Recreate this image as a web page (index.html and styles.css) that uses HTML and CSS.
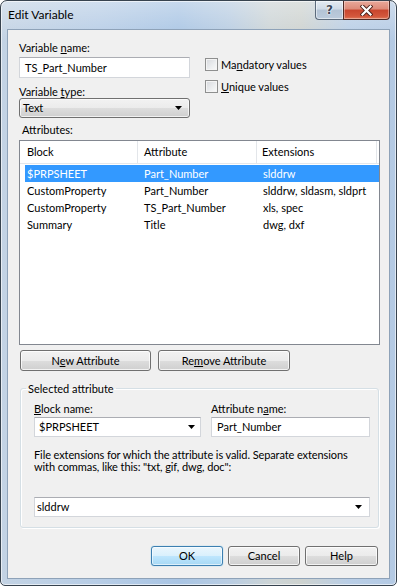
FILE: index.html
```html
<!DOCTYPE html>
<html>
<head>
<meta charset="utf-8">
<title>Edit Variable</title>
<link rel="stylesheet" href="styles.css">
</head>
<body>
<div class="window">
  <div class="titlebar">
    <span class="title">Edit Variable</span>
    <div class="caption-btns">
      <div class="cap cap-help"><span class="qmark">?</span></div>
      <div class="cap cap-close">
        <svg width="13" height="11" viewBox="0 0 13 11"><path class="x-outer" d="M2.5 1.5 L10.5 9.5 M10.5 1.5 L2.5 9.5"/><path class="x-inner" d="M2.5 1.5 L10.5 9.5 M10.5 1.5 L2.5 9.5"/></svg>
      </div>
    </div>
  </div>
  <div class="client">
    <div class="top">
      <div class="col-left">
        <div class="lbl">Variable <u>n</u>ame:</div>
        <div class="textbox tb-name">TS_Part_Number</div>
        <div class="lbl lbl-type">Variable <u>t</u>ype:</div>
        <div class="combo-btn"><span>Text</span><svg class="arrow" width="7" height="4" viewBox="0 0 7 4"><path d="M0 0H7L3.5 4Z"/></svg></div>
      </div>
      <div class="col-right">
        <div class="check check-1"><span class="box"></span><span>Ma<u>n</u>datory values</span></div>
        <div class="check check-2"><span class="box"></span><span><u>U</u>nique values</span></div>
      </div>
    </div>
    <div class="lbl lbl-attrs">Attributes:</div>
    <div class="listview">
      <div class="lv-head"><div class="hc">Block</div><div class="hc">Attribute</div><div class="hc">Extensions</div></div>
      <div class="lv-body">
        <div class="lv-row selected"><div>$PRPSHEET</div><div>Part_Number</div><div>slddrw</div></div>
        <div class="lv-row"><div>CustomProperty</div><div>Part_Number</div><div>slddrw, sldasm, sldprt</div></div>
        <div class="lv-row"><div>CustomProperty</div><div>TS_Part_Number</div><div>xls, spec</div></div>
        <div class="lv-row"><div>Summary</div><div>Title</div><div>dwg, dxf</div></div>
      </div>
    </div>
    <div class="btnrow">
      <button class="btn btn-new">N<u>e</u>w Attribute</button>
      <button class="btn btn-remove">Re<u>m</u>ove Attribute</button>
    </div>
    <fieldset class="group">
      <legend>Selected attribute</legend>
      <div class="fields">
        <div class="field">
          <div class="lbl"><u>B</u>lock name:</div>
          <div class="combo-edit block-combo"><span>$PRPSHEET</span><svg class="arrow" width="7" height="4" viewBox="0 0 7 4"><path d="M0 0H7L3.5 4Z"/></svg></div>
        </div>
        <div class="field">
          <div class="lbl">Attribute n<u>a</u>me:</div>
          <div class="textbox tb-attr">Part_Number</div>
        </div>
      </div>
      <p class="desc">File extensions for which the attribute is valid. Separate extensions<br>with commas, like this: "txt, gif, dwg, doc":</p>
      <div class="combo-edit ext-combo"><span>slddrw</span><svg class="arrow" width="7" height="4" viewBox="0 0 7 4"><path d="M0 0H7L3.5 4Z"/></svg></div>
    </fieldset>
    <div class="dlg-btns">
      <button class="btn btn-dlg btn-default">OK</button>
      <button class="btn btn-dlg">Cancel</button>
      <button class="btn btn-dlg btn-help">Help</button>
    </div>
  </div>
</div>
</body>
</html>
```
FILE: styles.css
```css
* { box-sizing: border-box; }
html, body { margin: 0; padding: 0; }
body {
  width: 397px;
  height: 586px;
  overflow: hidden;
  background: #ffffff;
  font-family: Lato, "Liberation Sans", sans-serif;
  font-size: 11px;
  color: #000;
}
u { text-decoration: underline; text-underline-offset: 1px; }

.window {
  width: 397px;
  height: 586px;
  border: 1px solid #37434f;
  border-radius: 7px 7px 5px 5px;
  overflow: hidden;
  display: flex;
  flex-direction: column;
  background:
    linear-gradient(180deg, rgba(255,255,255,0.35) 0px, rgba(255,255,255,0) 40px),
    linear-gradient(90deg, #c3d3e4 0%, #b7cde6 25%, #a9c5e4 45%, #b9cde2 58%, #ccd4d6 68%, #cdd2cf 76%, #b9cee6 88%, #b4cae4 100%);
  box-shadow: inset 0 0 0 1px rgba(255,255,255,0.6);
}

.titlebar {
  height: 28px;
  flex: none;
  display: flex;
  justify-content: space-between;
  align-items: flex-start;
  padding: 0 6px 0 7px;
}
.title {
  font-size: 12px;
  line-height: 14px;
  margin-top: 7px;
  color: #000;
}
.caption-btns { display: flex; }
.cap {
  height: 19px;
  display: flex;
  align-items: center;
  justify-content: center;
}
.cap-help {
  width: 28px;
  border: 1px solid #5c6b7c;
  border-right: none;
  border-top: none;
  border-radius: 0 0 0 4px;
  background: linear-gradient(180deg, #e4ebf2 0%, #cfdae6 45%, #b3c3d5 50%, #bccbdc 100%);
  box-shadow: inset 0 0 0 1px rgba(255,255,255,0.5);
}
.qmark {
  font-family: "DejaVu Sans", sans-serif;
  font-weight: bold;
  font-size: 12px;
  line-height: 12px;
  color: #3c4a5a;
  text-shadow: 0 0 1px #fff, 0 0 1px #fff, 0 0 2px #fff;
}
.cap-close {
  width: 47px;
  border: 1px solid #4f2a25;
  border-top: none;
  border-radius: 0 0 4px 0;
  background: linear-gradient(180deg, #e9a99b 0%, #dd8a78 45%, #c8452d 50%, #d3573c 85%, #e07a5a 100%);
  box-shadow: inset 0 0 0 1px rgba(255,255,255,0.35);
}
.x-outer { stroke: #4a2019; stroke-width: 4; fill: none; stroke-linecap: square; }
.x-inner { stroke: #ffffff; stroke-width: 2.2; fill: none; stroke-linecap: square; }

.client {
  margin: 0 6px 6px 6px;
  height: 550px;
  flex: none;
  border: 1px solid #8ea2b8;
  background: #f0f0f0;
  padding: 11px 9px 0 11px;
  display: flex;
  flex-direction: column;
}

.lbl { line-height: 13px; white-space: nowrap; }

.top { display: flex; }
.col-left { width: 171px; display: flex; flex-direction: column; }
.col-right { margin-left: 15px; display: flex; flex-direction: column; }

.textbox {
  height: 21px;
  margin-top: 3px;
  background: #fff;
  border: 1px solid #d3d6db;
  border-top-color: #abadb3;
  padding-left: 5px;
  line-height: 19px;
  white-space: nowrap;
}
.lbl-type { margin-top: 7px; }

.combo-btn {
  height: 20px;
  border: 1px solid #707070;
  border-radius: 3px;
  background: linear-gradient(180deg, #f2f2f2 0%, #ebebeb 50%, #dddddd 51%, #cfcfcf 100%);
  box-shadow: inset 0 0 0 1px rgba(255,255,255,0.7);
  display: flex;
  align-items: center;
  justify-content: space-between;
  padding: 0 7px 0 3px;
  line-height: 18px;
}
.arrow { display: block; fill: #000; }

.check {
  display: flex;
  align-items: center;
  height: 13px;
  line-height: 13px;
  white-space: nowrap;
}
.check-1 { margin-top: 17px; }
.check-2 { margin-top: 9px; }
.box {
  width: 13px;
  height: 13px;
  flex: none;
  margin-right: 3px;
  border: 1px solid #8e8f8f;
  background: linear-gradient(135deg, #d6d8dc 0%, #eceef0 60%, #fafafa 100%);
  box-shadow: inset 0 0 0 1px #f4f4f4;
}

.lbl-attrs { margin-top: 5px; padding-left: 3px; }

.listview {
  height: 205px;
  margin-top: 4px;
  border: 1px solid #828790;
  background: #fff;
  flex: none;
}
.lv-head {
  display: grid;
  grid-template-columns: 118px 119px 120px;
  height: 23px;
  border-bottom: 1px solid #e5e7ea;
}
.hc {
  line-height: 22px;
  border-right: 1px solid #e3e6ea;
  padding-left: 7px;
  white-space: nowrap;
}
.hc:nth-child(2) { padding-left: 6px; }
.hc:nth-child(3) { padding-left: 5px; }
.lv-body { padding-top: 1px; }
.lv-row {
  display: grid;
  grid-template-columns: 113px 119px 120px;
  margin-left: 5px;
  height: 17px;
  line-height: 17px;
  white-space: nowrap;
}
.lv-row > div { overflow: hidden; }
.lv-row > div:nth-child(1) { padding-left: 2px; }
.lv-row > div:nth-child(2) { padding-left: 6px; }
.lv-row > div:nth-child(3) { padding-left: 6px; }
.lv-row.selected { background: #3399ff; color: #fff; }

.btn {
  font-family: inherit;
  font-size: 11px;
  color: #000;
  margin: 0;
  padding: 0;
  border: 1px solid #707070;
  border-radius: 3px;
  background: linear-gradient(180deg, #f2f2f2 0%, #ebebeb 50%, #dddddd 51%, #cfcfcf 100%);
  box-shadow: inset 0 0 0 1px rgba(255,255,255,0.75);
  line-height: 18px;
  text-align: center;
  white-space: nowrap;
}
.btnrow { display: flex; gap: 7px; margin-top: 5px; padding-left: 1px; }
.btn-new { width: 131px; height: 21px; }
.btn-remove { width: 132px; height: 21px; }

.group {
  margin: 11px 1px 0 1px;
  padding: 7px 8px 10px 13px;
  border: 1px solid #d5dfe5;
  border-radius: 3px;
  box-shadow: inset 1px 1px 0 #ffffff, 1px 1px 0 #ffffff;
  min-inline-size: 0;
}
.group legend {
  padding: 0 2px;
  margin-left: -8px;
  line-height: 13px;
  font-size: 11px;
}
.fields {
  display: grid;
  grid-template-columns: 167px 1fr;
  column-gap: 10px;
}
.field .textbox { margin-top: 2px; height: 20px; line-height: 18px; }
.combo-edit {
  height: 20px;
  background: #fff;
  border: 1px solid #d3d6db;
  border-top-color: #abadb3;
  display: flex;
  align-items: center;
  justify-content: space-between;
  white-space: nowrap;
  line-height: 18px;
}
.block-combo { margin-top: 2px; padding: 0 5px 0 4px; }
.ext-combo { margin-top: 24px; padding: 0 7px 0 2px; }
.desc {
  margin: 12px 0 0 0;
  line-height: 12px;
  white-space: nowrap;
  letter-spacing: -0.1px;
}

.dlg-btns {
  display: flex;
  justify-content: flex-end;
  gap: 5px;
  margin-top: 18px;
  margin-right: 2px;
}
.btn-dlg { width: 72px; height: 20px; }
.btn-help { width: 73px; }
.btn-default {
  border-color: #3c7fb1;
  background: linear-gradient(180deg, #eaf6fd 0%, #d9f0fc 50%, #bee6fd 51%, #a7d9f5 100%);
  box-shadow: inset 0 0 0 1px rgba(255,255,255,0.6), 0 0 1px #48b5e6;
}
```
